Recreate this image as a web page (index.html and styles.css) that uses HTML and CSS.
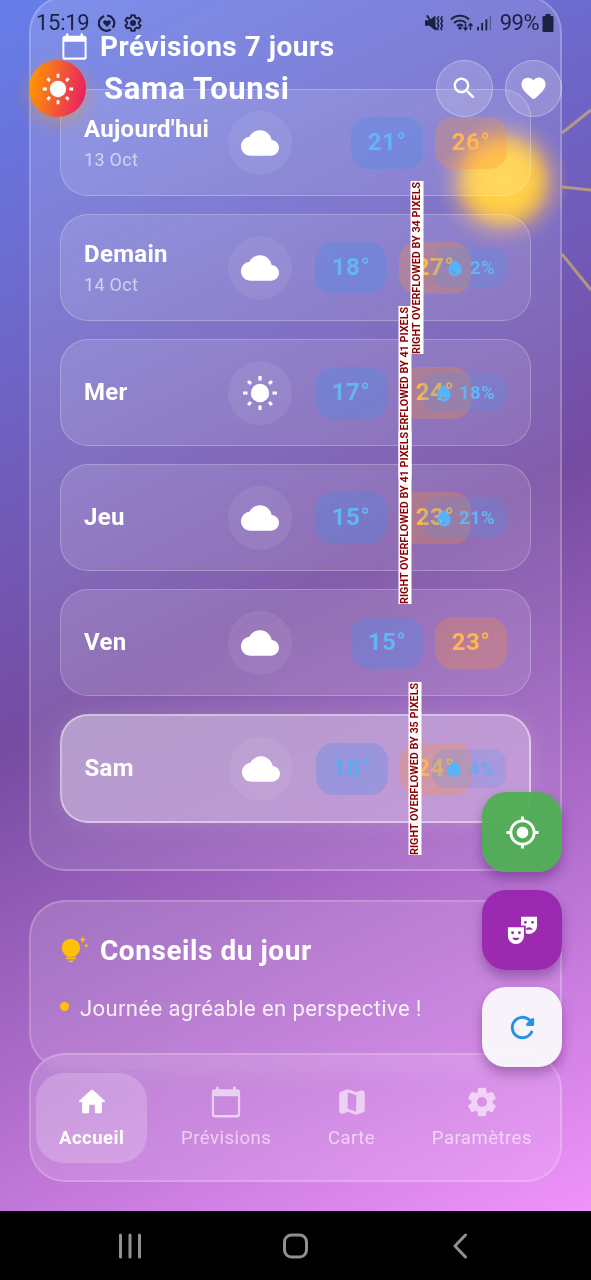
FILE: index.html
```html
<!DOCTYPE html>
<html lang="fr">
<head>
<meta charset="utf-8">
<title>Sama Tounsi</title>
<link rel="stylesheet" href="styles.css">
</head>
<body>
<svg class="defs" aria-hidden="true">
  <symbol id="cloud" viewBox="0 0 24 24"><path d="M19.35 10.04C18.67 6.59 15.64 4 12 4 9.11 4 6.6 5.64 5.35 8.04 2.34 8.36 0 10.91 0 14c0 3.31 2.69 6 6 6h13c2.76 0 5-2.24 5-5 0-2.64-2.05-4.78-4.65-4.96z"/></symbol>
  <symbol id="sun" viewBox="0 0 24 24"><circle cx="12" cy="12" r="5.8"/><g stroke="currentColor" stroke-width="2"><path d="M12 1.300v2.800M12 19.900v2.800M1.300 12h2.800M19.900 12h2.800M4.500 4.500l1.800 1.800M17.700 17.700l1.800 1.800M4.500 19.500l1.800-1.800M17.700 6.300l1.800-1.800"/></g></symbol>
  <symbol id="calendar" viewBox="0 0 24 24"><path d="M20 3h-1V2c0-.55-.45-1-1-1s-1 .45-1 1v1H7V2c0-.55-.45-1-1-1s-1 .45-1 1v1H4c-1.100 0-2 .9-2 2v16c0 1.100.9 2 2 2h16c1.100 0 2-.9 2-2V5c0-1.100-.9-2-2-2zm-.4 18.200H4.400c-.4 0-.8-.4-.8-.8V8h16.800v12.400c0 .4-.4.8-.8.8z"/></symbol>
  <symbol id="drop" viewBox="0 0 24 24"><path fill-rule="evenodd" d="M12 2c-5.330 4.550-8 8.480-8 11.800 0 4.980 3.800 8.200 8 8.200s8-3.220 8-8.200C20 10.480 17.330 6.550 12 2zM7.800 14c.4 0 .7.300.8.600.4 2.200 2.300 3 3.700 2.900.5 0 .9.300.9.800 0 .4-.3.700-.7.700-2.100.1-4.800-1.100-5.400-4.100-.1-.5.300-.9.700-.9z"/></symbol>
  <symbol id="home" viewBox="0 0 24 24"><path d="M10 19v-5h4v5c0 .55.45 1 1 1h3c.55 0 1-.45 1-1v-7h1.700c.46 0 .68-.57.33-.87L12.670 3.600c-.38-.34-.96-.34-1.340 0l-8.360 7.530c-.34.3-.13.87.33.87H5v7c0 .55.45 1 1 1h3c.55 0 1-.45 1-1z"/></symbol>
  <symbol id="map" viewBox="0 0 24 24"><path d="M14.65 4.98l-5-1.75c-.42-.15-.88-.15-1.300-.01L4.360 4.560C3.550 4.840 3 5.600 3 6.460v11.850c0 1.410 1.410 2.370 2.720 1.860l2.930-1.140c.22-.09.47-.09.69-.01l5 1.750c.42.15.88.15 1.300.01l3.990-1.340c.81-.27 1.360-1.040 1.360-1.900V5.690c0-1.410-1.410-2.370-2.720-1.860l-2.930 1.140c-.22.08-.46.09-.69.01zM15 18.890l-6-2.110V5.110l6 2.110v11.670z"/></symbol>
  <symbol id="settings" viewBox="0 0 24 24"><path d="M19.500 12c0-.23-.01-.45-.03-.68l1.860-1.410c.4-.3.51-.86.26-1.300l-1.870-3.230c-.25-.44-.79-.62-1.250-.42l-2.150.91c-.37-.26-.76-.49-1.170-.68l-.29-2.310c-.06-.5-.49-.88-.99-.88h-3.730c-.51 0-.94.38-1 .88l-.29 2.310c-.41.19-.8.42-1.170.68l-2.150-.91c-.46-.2-1-.02-1.250.42L2.410 8.620c-.25.44-.14.99.26 1.300l1.860 1.410c-.02.22-.03.44-.03.67s.01.45.03.68l-1.860 1.410c-.4.3-.51.86-.26 1.300l1.870 3.230c.25.44.79.62 1.250.42l2.150-.91c.37.26.76.49 1.170.68l.29 2.310c.06.5.49.88.99.88h3.730c.5 0 .93-.38.99-.88l.29-2.310c.41-.19.8-.42 1.170-.68l2.150.91c.46.2 1 .02 1.250-.42l1.870-3.230c.25-.44.14-.99-.26-1.300l-1.860-1.410c.03-.23.04-.45.04-.68zm-7.460 3.500c-1.930 0-3.500-1.570-3.500-3.500s1.570-3.500 3.500-3.500 3.500 1.570 3.500 3.500-1.570 3.500-3.500 3.500z"/></symbol>
  <symbol id="search" viewBox="0 0 24 24"><path d="M15.500 14h-.79l-.28-.27c1.200-1.400 1.820-3.310 1.480-5.340-.47-2.780-2.790-5-5.590-5.340-4.230-.52-7.790 3.040-7.270 7.270.34 2.800 2.560 5.120 5.340 5.590 2.030.34 3.940-.28 5.340-1.480l.27.28v.79l4.250 4.250c.41.41 1.080.41 1.490 0 .41-.41.41-1.080 0-1.490L15.500 14zm-6 0C7.010 14 5 11.990 5 9.500S7.010 5 9.500 5 14 7.010 14 9.500 11.990 14 9.500 14z"/></symbol>
  <symbol id="heart" viewBox="0 0 24 24"><path d="M13.350 20.130c-.76.69-1.930.69-2.690-.01l-.11-.1C5.300 15.270 1.870 12.160 2 8.280c.06-1.700.93-3.330 2.340-4.290 2.640-1.800 5.900-.96 7.660 1.100 1.760-2.060 5.020-2.910 7.660-1.100 1.410.96 2.280 2.590 2.340 4.290.14 3.880-3.300 6.990-8.550 11.760l-.1.09z"/></symbol>
  <symbol id="locate" viewBox="0 0 24 24"><path d="M12 8c-2.210 0-4 1.790-4 4s1.790 4 4 4 4-1.790 4-4-1.790-4-4-4zm8.940 3c-.46-4.170-3.770-7.480-7.940-7.940V1h-2v2.060C6.830 3.520 3.520 6.830 3.060 11H1v2h2.060c.46 4.170 3.770 7.480 7.940 7.940V23h2v-2.060c4.170-.46 7.480-3.770 7.940-7.940H23v-2h-2.060zM12 19c-3.870 0-7-3.130-7-7s3.130-7 7-7 7 3.130 7 7-3.130 7-7 7z"/></symbol>
  <symbol id="masks" viewBox="0 0 24 24"><path fill-rule="evenodd" d="M2 10.500V16.500a5.500 5.500 0 0 0 11 0V10.500H2zM5.200 15.200a1 1 0 1 1 0-2 1 1 0 0 1 0 2zm4.700 0a1 1 0 1 1 0-2 1 1 0 0 1 0 2zM5 17.600h5c-.5 1.200-1.500 1.700-2.500 1.700S5.500 18.800 5 17.600z"/><path fill-rule="evenodd" d="M11 3.200v6.100h3.200v5.300c.7.300 1.500.4 2.300.4a5.500 5.500 0 0 0 5.500-5.500V3.200H11zm3 4.900a1 1 0 1 1 0-2 1 1 0 0 1 0 2zm4.900 0a1 1 0 1 1 0-2 1 1 0 0 1 0 2zM14.200 12.200c.4-1.200 1.300-1.700 2.400-1.700s2 .6 2.400 1.700h-4.800z"/></symbol>
  <symbol id="refresh" viewBox="0 0 24 24"><path d="M17.650 6.350c-1.630-1.630-3.940-2.570-6.480-2.310-3.670.37-6.690 3.350-7.100 7.020C3.520 15.910 7.270 20 12 20c3.190 0 5.930-1.870 7.210-4.560.32-.67-.16-1.440-.9-1.440-.37 0-.72.2-.88.53-1.130 2.430-3.840 3.970-6.800 3.310-2.220-.49-4.010-2.300-4.480-4.520C5.310 9.440 8.260 6 12 6c1.660 0 3.140.69 4.220 1.780l-1.510 1.510c-.63.63-.19 1.710.7 1.710H19c.55 0 1-.45 1-1V6.410c0-.89-1.080-1.340-1.710-.71l-.64.65z"/></symbol>
</svg>

<div class="screen">
  <svg class="sky" viewBox="0 0 591 1211" aria-hidden="true">
    <defs>
      <radialGradient id="glow">
        <stop offset="0" stop-color="#ffd034"/>
        <stop offset=".42" stop-color="#ffc62e"/>
        <stop offset=".6" stop-color="#fcb930" stop-opacity=".8"/>
        <stop offset=".78" stop-color="#f0a850" stop-opacity=".3"/>
        <stop offset="1" stop-color="#e0a070" stop-opacity="0"/>
      </radialGradient>
    </defs>
    <path d="M562 133L591 110M562 187L591 190M562 254L591 290" stroke="#d6b768" stroke-width="3" opacity=".65"/>
    <circle cx="503" cy="181" r="66" fill="url(#glow)"/>
  </svg>

  <main class="content">
    <section class="glass forecast">
      <h2 class="heading"><svg class="i29"><use href="#calendar"/></svg><span class="forecast-title">Prévisions 7 jours</span></h2>
      <div class="days">
        <article class="day">
          <div class="when"><b>Aujourd'hui</b><small>13 Oct</small></div>
          <div class="weather"><svg><use href="#cloud"/></svg></div>
          <div class="temps"><span class="low">21°</span><span class="high">26°</span></div>
        </article>
        <article class="day wet">
          <div class="when"><b>Demain</b><small>14 Oct</small></div>
          <div class="weather"><svg><use href="#cloud"/></svg></div>
          <div class="temps"><span class="low">18°</span><span class="high">27°</span></div>
          <span class="rain"><svg><use href="#drop"/></svg>2%</span>
          <span class="overflow over34">RIGHT OVERFLOWED BY 34 PIXELS</span>
        </article>
        <article class="day wet">
          <div class="when"><b>Mer</b></div>
          <div class="weather"><svg><use href="#sun"/></svg></div>
          <div class="temps"><span class="low">17°</span><span class="high">24°</span></div>
          <span class="rain"><svg><use href="#drop"/></svg>18%</span>
          <span class="overflow over41">RIGHT OVERFLOWED BY 41 PIXELS</span>
        </article>
        <article class="day wet">
          <div class="when"><b>Jeu</b></div>
          <div class="weather"><svg><use href="#cloud"/></svg></div>
          <div class="temps"><span class="low">15°</span><span class="high">23°</span></div>
          <span class="rain"><svg><use href="#drop"/></svg>21%</span>
          <span class="overflow over41">RIGHT OVERFLOWED BY 41 PIXELS</span>
        </article>
        <article class="day">
          <div class="when"><b>Ven</b></div>
          <div class="weather"><svg><use href="#cloud"/></svg></div>
          <div class="temps"><span class="low">15°</span><span class="high">23°</span></div>
        </article>
        <article class="day wet selected">
          <div class="when"><b>Sam</b></div>
          <div class="weather"><svg><use href="#cloud"/></svg></div>
          <div class="temps"><span class="low">18°</span><span class="high">24°</span></div>
          <span class="rain"><svg><use href="#drop"/></svg>4%</span>
          <span class="overflow over35">RIGHT OVERFLOWED BY 35 PIXELS</span>
        </article>
      </div>
    </section>

    <section class="glass tips">
      <h2 class="heading"><svg class="i29 amber" viewBox="0 0 24 24"><circle cx="9" cy="9.800" r="7.600"/><path d="M4.800 15.300h8.400l-.7 1.600h-7zM5 17.800h8v1.500H5zM6.600 20.200h4.800l-1.200 1.500H7.800zM18.800 0l.8 2.200 2.200.8-2.200.8-.8 2.200-.8-2.200-2.200-.8 2.200-.8zM21.800 6l.6 1.500 1.500.6-1.500.6-.6 1.500-.6-1.500-1.500-.6 1.500-.6z"/></svg><span class="tips-title">Conseils du jour</span></h2>
      <p class="tip"><i class="dot"></i><span>Journée agréable en perspective !</span></p>
    </section>
  </main>

  <div class="status">
    <div class="status-side">
      <span class="clock">15:19</span>
      <svg class="i18" viewBox="0 0 18 18"><g fill="none" stroke="currentColor" stroke-width="2.200"><path d="M9 1.600a7.500 7.500 0 0 1 5.600 12.200" /><path d="M12.700 15.400A7.500 7.500 0 1 1 6.200 2.100"/></g><path d="M9 13L5.600 9.500C4 7.500 7 5 9 7.200c2-2.200 5 .3 3.400 2.300z"/></svg>
      <svg class="i18 gear" viewBox="0 0 24 24"><g fill="none" stroke="currentColor" stroke-width="2.600" stroke-linejoin="round"><path d="M9.800 1.700h4.400l.7 3 2 1.200 3-.9 2.200 3.800-2.300 2.100v2.300l2.300 2.100-2.200 3.800-3-.9-2 1.200-.7 3H9.800l-.7-3-2-1.200-3 .9-2.200-3.800 2.300-2.100v-2.300L1.900 8.800 4.100 5l3 .9 2-1.200z"/></g><circle cx="12" cy="12" r="4"/></svg>
    </div>
    <div class="status-side">
      <svg class="mute" viewBox="0 0 20 18"><path d="M0 6h4.500l6.500-5v16l-6.500-5H0z"/><path d="M2 1l10 15" stroke="currentColor" stroke-width="2"/><path d="M14.500 2l-1.500 2.500 1.500 2.500-1.500 2.500 1.500 2.500-1.500 2.500 1 2M18.300 2l-1.500 2.500 1.500 2.500-1.500 2.500 1.500 2.500-1.500 2.500 1 2" fill="none" stroke="currentColor" stroke-width="1.700"/></svg>
      <svg class="wifi" viewBox="0 0 24 18"><g fill="none" stroke="currentColor" stroke-width="2"><path d="M1 5.500c5-5 13-5 18 0M4 9c3.500-3.500 8.500-3.500 12 0M7 12c2-1.800 4-1.800 6 0"/></g><circle cx="10" cy="14" r="1.800"/><path d="M15.500 9.500v6M13.500 13.500l2 2.500 2-2.500M20.500 16v-6M18.500 12l2-2.500 2 2.500" fill="none" stroke="currentColor" stroke-width="1.400"/></svg>
      <svg class="signal" viewBox="0 0 16 17"><path d="M0 13h2v4H0zM4.500 9h2v8h-2zM9 5h2v12H9z"/><path opacity=".4" d="M13.500 1h1.500v16h-1.500z"/></svg>
      <span class="percent">99%</span>
      <svg class="battery" viewBox="0 0 12 18"><path d="M3.500 0h5v2H10c1 0 1.500.5 1.500 1.500v13c0 1-.5 1.500-1.500 1.500H2C1 18 .5 17.500.5 16.500v-13C.5 2.500 1 2 2 2h1.500z"/></svg>
    </div>
  </div>

  <header class="appbar">
    <span class="logo"><svg><use href="#sun"/></svg></span>
    <h1>Sama Tounsi</h1>
    <button class="round"><svg class="i29"><use href="#search"/></svg></button>
    <button class="round"><svg class="i29"><use href="#heart"/></svg></button>
  </header>

  <nav class="nav">
    <a class="item active"><svg><use href="#home"/></svg><span>Accueil</span></a>
    <a class="item"><svg><use href="#calendar"/></svg><span>Prévisions</span></a>
    <a class="item"><svg><use href="#map"/></svg><span>Carte</span></a>
    <a class="item"><svg><use href="#settings"/></svg><span>Paramètres</span></a>
  </nav>

  <div class="fabs">
    <button class="fab green"><svg><use href="#locate"/></svg></button>
    <button class="fab purple"><svg><use href="#masks"/></svg></button>
    <button class="fab white"><svg><use href="#refresh"/></svg></button>
  </div>
</div>

<footer class="system">
  <svg viewBox="0 0 591 69" fill="none" stroke="#909090" stroke-width="3" stroke-linecap="round" stroke-linejoin="round"><path d="M120.500 24v22M130 24v22M139.500 24v22M465.500 24L455 35l10.500 11"/><rect x="284.500" y="24" width="22" height="22" rx="7"/></svg>
</footer>
</body>
</html>
```

FILE: styles.css
```css
* { box-sizing: border-box; }
body { margin: 0; width: 591px; height: 1280px; overflow: hidden; background: #000; font-family: Roboto, sans-serif; color: #fff; }
svg { display: block; flex: none; fill: currentColor; }
.defs { position: absolute; width: 0; height: 0; }
h1, h2, p { margin: 0; }
button { border: 0; padding: 0; color: inherit; display: grid; place-items: center; }

.screen { position: relative; height: 1211px; overflow: hidden; background: linear-gradient(154deg, #667eea 0%, #764ba2 50%, #f093fb 100%); }
.sky { position: absolute; inset: 0; width: 591px; height: 1211px; }

.content { position: relative; margin-top: -4px; padding: 0 29px; display: flex; flex-direction: column; gap: 29px; }
.glass { border: 2px solid rgba(255,255,255,.2); border-radius: 36px; background: linear-gradient(154deg, rgba(255,255,255,.15), rgba(255,255,255,.08)); backdrop-filter: blur(3px); }
.forecast { height: 875px; padding: 32px 29px 0; }
.heading { display: flex; align-items: center; gap: 11px; height: 33px; font-size: 28px; line-height: 33px; font-weight: 700; }
.forecast-title { letter-spacing: .5px; }
.tips-title { letter-spacing: .55px; }
.i29 { width: 29px; height: 29px; }
.amber { color: #ffc107; }

.days { display: flex; flex-direction: column; gap: 18px; margin-top: 26px; }
.day { position: relative; height: 107px; display: flex; align-items: center; padding: 0 23px; border: 1.500px solid rgba(255,255,255,.23); border-radius: 28px; background: linear-gradient(154deg, rgba(255,255,255,.13), rgba(255,255,255,.09)); }
.when { width: 144px; display: flex; flex-direction: column; gap: 6px; padding-bottom: 1px; }
.when b { font-size: 24px; line-height: 28px; letter-spacing: .3px; }
.when small { font-size: 18px; line-height: 21px; letter-spacing: .3px; color: rgba(255,255,255,.6); }
.weather { width: 64px; height: 64px; border-radius: 50%; display: grid; place-items: center; background: rgba(255,255,255,.07); }
.weather svg { width: 38px; height: 38px; }
.temps { flex: 1; display: flex; justify-content: flex-end; gap: 12px; }
.wet .temps { padding-right: 36px; }
.temps span { width: 72px; height: 52px; padding-bottom: 2px; border-radius: 18px; display: grid; place-items: center; font-size: 24px; font-weight: 700; letter-spacing: .6px; }
.low { color: #64b5f6; background: rgba(66,140,235,.3); }
.high { color: #ffb74d; background: rgba(255,145,50,.28); }
.rain { position: absolute; right: 23px; top: 33px; height: 39px; padding: 0 12px 0 12px; display: flex; align-items: center; gap: 5px; border-radius: 14px; background: rgba(66,150,243,.2); color: #64b5f6; font-size: 18.500px; font-weight: 700; letter-spacing: .4px; }
.rain svg { width: 20px; height: 20px; color: #55b4fb; }
.overflow { position: absolute; z-index: 3; top: -34.500px; width: 12.500px; height: 173px; display: flex; align-items: center; justify-content: center; writing-mode: vertical-rl; transform: rotate(180deg); background: #fff; color: #8b0000; font-size: 10.800px; line-height: 12px; font-weight: 700; white-space: nowrap; }
.over34 { right: 107px; }
.over41 { right: 118.500px; }
.over35 { right: 107.500px; }
.selected { height: 109px; padding-left: 22.500px; border: 2px solid rgba(255,255,255,.42); background: linear-gradient(154deg, rgba(255,255,255,.4), rgba(255,255,255,.26)); box-shadow: 0 0 22px rgba(255,255,255,.13); }
.selected .temps { padding-right: 34.500px; }
.selected .low { background: rgba(90,140,235,.35); color: #5cacf2; }
.selected .rain { color: #6aabf0; }

.tips { height: 169px; padding: 32px 29px 0; }
.tip { display: flex; gap: 11px; margin-top: 27px; font-size: 22px; line-height: 29px; letter-spacing: .4px; color: rgba(255,255,255,.88); }
.dot { width: 9px; height: 9px; margin-top: 8px; border-radius: 50%; background: #ffc107; }

.status { position: absolute; top: 8px; left: 36px; right: 36px; height: 29px; display: flex; justify-content: space-between; color: #1d2142; font-size: 22px; }
.status-side { display: flex; align-items: center; }
.clock { margin-right: 9px; letter-spacing: -.3px; }
.i18 { width: 18px; height: 18px; }
.gear { margin-left: 8px; }
.mute { width: 19px; height: 18px; }
.wifi { width: 24px; height: 18px; margin-left: 6px; }
.signal { width: 15px; height: 17px; margin-left: 3px; }
.percent { margin-left: 8px; letter-spacing: -.5px; }
.battery { width: 12px; height: 18px; margin-left: 3px; margin-right: 1px; }

.appbar { position: absolute; top: 60px; left: 29px; right: 29px; display: flex; align-items: center; gap: 12px; }
.appbar h1 { flex: 1; padding-left: 6px; font-size: 31px; line-height: 37px; letter-spacing: .6px; }
.logo { width: 57px; height: 57px; border-radius: 50%; display: grid; place-items: center; background: linear-gradient(100deg, #ff9800 5%, #e91e63 95%); box-shadow: 0 6px 18px rgba(255,152,0,.4); }
.logo svg { width: 34px; height: 34px; }
.round { width: 57px; height: 57px; border-radius: 50%; border: 1.500px solid rgba(255,255,255,.3); background: rgba(255,255,255,.17); }

.nav { position: absolute; left: 29px; top: 1053px; width: 533px; height: 129px; padding: 0 5px; display: flex; align-items: center; justify-content: space-between; border: 2px solid rgba(255,255,255,.2); border-radius: 36px; background: linear-gradient(154deg, rgba(255,255,255,.15), rgba(255,255,255,.1)); backdrop-filter: blur(10px); }
.item { height: 90px; padding: 0 23px 1px; border-radius: 28px; display: flex; flex-direction: column; align-items: center; justify-content: center; gap: 8px; font-size: 18.500px; line-height: 22px; letter-spacing: .5px; color: rgba(255,255,255,.6); }
.item svg { width: 34px; height: 34px; }
.active { color: #fff; background: rgba(255,255,255,.2); font-weight: 700; }

.fabs { position: absolute; right: 29px; top: 792px; display: flex; flex-direction: column; gap: 17.500px; }
.fab { width: 80px; height: 80px; border-radius: 24px; box-shadow: 0 7px 12px rgba(50,0,70,.32); }
.fab svg { width: 35px; height: 35px; }
.green { background: rgba(76,175,80,.93); }
.purple { background: rgba(152,36,174,.94); }
.white { background: rgba(250,248,251,.95); color: #2492e6; }

.system { height: 69px; background: #000; }
.system svg { width: 591px; height: 69px; fill: none; }
```
